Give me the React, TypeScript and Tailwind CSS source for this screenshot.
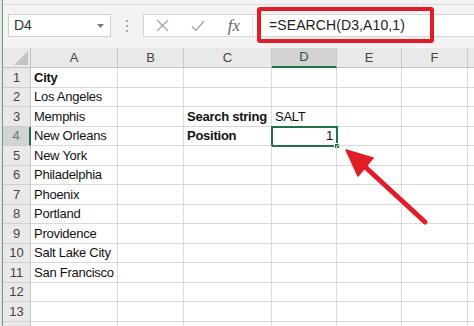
import React from 'react';

const cols = [
  { key: 'A', w: 'w-[87px]' },
  { key: 'B', w: 'w-[66px]' },
  { key: 'C', w: 'w-[88px]' },
  { key: 'D', w: 'w-[65px]' },
  { key: 'E', w: 'w-[65px]' },
  { key: 'F', w: 'w-[66px]' },
  { key: '', w: 'w-[40px]' },
];

const cities = [
  'City',
  'Los Angeles',
  'Memphis',
  'New Orleans',
  'New York',
  'Philadelphia',
  'Phoenix',
  'Portland',
  'Providence',
  'Salt Lake City',
  'San Francisco',
];

type CellData = { text: string; bold?: boolean; right?: boolean };

const getCell = (row: number, col: string): CellData | null => {
  if (col === 'A' && row <= cities.length) return { text: cities[row - 1], bold: row === 1 };
  if (row === 3 && col === 'C') return { text: 'Search string', bold: true };
  if (row === 3 && col === 'D') return { text: 'SALT' };
  if (row === 4 && col === 'C') return { text: 'Position', bold: true };
  if (row === 4 && col === 'D') return { text: '1', right: true };
  return null;
};

const Toolbar: React.FC = () => (
  <div className="h-[44px] shrink-0 bg-[#f3f3f3] border-t border-[#dcdcdc] pt-[9px] flex items-start">
    {/* name box */}
    <div className="ml-[5px] w-[103px] h-[23px] bg-white border border-[#d0d0d0] flex items-center justify-between pl-[5px] pr-[6px]">
      <span className="text-[14px] text-[#333]">D4</span>
      <svg width="7" height="4" viewBox="0 0 7 4">
        <path d="M0 0 L7 0 L3.5 4 Z" fill="#777" />
      </svg>
    </div>
    {/* dots */}
    <div className="w-[32px] h-[23px] flex flex-col items-center justify-center gap-[3px]">
      <span className="w-[2px] h-[2px] bg-[#a8a8a8]" />
      <span className="w-[2px] h-[2px] bg-[#a8a8a8]" />
      <span className="w-[2px] h-[2px] bg-[#a8a8a8]" />
    </div>
    {/* formula box */}
    <div className="flex-1 h-[23px] bg-white border border-[#d6d6d6] border-r-0 flex items-center">
      <div className="w-[36px] h-full flex items-center justify-center">
        <svg width="13" height="13" viewBox="0 0 13 13">
          <path d="M1 1 L12 12 M12 1 L1 12" stroke="#a6a6a6" strokeWidth="1.3" />
        </svg>
      </div>
      <div className="w-[36px] h-full flex items-center justify-center">
        <svg width="14" height="12" viewBox="0 0 14 12">
          <path d="M1 6.5 L5 10.5 L13 1" stroke="#a6a6a6" strokeWidth="1.4" fill="none" />
        </svg>
      </div>
      <div className="w-[36px] h-full flex items-center justify-center">
        <span className="font-['Liberation_Serif',serif] italic text-[17px] text-[#666] leading-none">fx</span>
      </div>
      <div className="w-[1px] h-full bg-[#e4e4e4]" />
      <span className="pl-[16px] text-[14px] text-[#222] tracking-[0.1px]">=SEARCH(D3,A10,1)</span>
    </div>
  </div>
);

const Grid: React.FC = () => {
  const rows = Array.from({ length: 14 }, (_, i) => i + 1);
  return (
    <div className="flex flex-col">
      {/* column headers */}
      <div className="flex h-[20px] shrink-0">
        <div className="w-[28px] shrink-0 h-full bg-[#e9e9e9] border-r border-b border-[#c4c4c4] flex items-end justify-end pr-[2px] pb-[2px]">
          <svg width="14" height="14" viewBox="0 0 14 14">
            <path d="M14 0 L14 14 L0 14 Z" fill="#c3c3c3" />
          </svg>
        </div>
        {cols.map((c) => (
          <div
            key={c.key + 'h'}
            className={`${c.w} shrink-0 h-full border-r border-[#c8c8c8] flex items-center justify-center text-[13px] ${
              c.key === 'D'
                ? 'bg-[#d3d3d3] border-b-2 border-b-[#217346] text-[#1e5c38]'
                : 'bg-[#e9e9e9] border-b border-b-[#c4c4c4] text-[#444]'
            }`}
          >
            {c.key}
          </div>
        ))}
      </div>
      {rows.map((r) => (
        <div key={r} className="flex h-[19.5px] shrink-0">
          <div
            className={`w-[28px] shrink-0 h-full border-b border-[#cfcfcf] flex items-center justify-center text-[13px] ${
              r === 4
                ? 'bg-[#d3d3d3] border-r-2 border-r-[#217346] text-[#5d7d68]'
                : 'bg-[#e9e9e9] border-r border-r-[#c4c4c4] text-[#444]'
            }`}
          >
            {r < 14 ? r : ''}
          </div>
          {cols.map((c) => {
            const cell = getCell(r, c.key);
            const selected = r === 4 && c.key === 'D';
            return (
              <div
                key={c.key + r}
                className={`${c.w} shrink-0 h-full relative border-r border-b border-[#dadada] flex items-center px-[3px] whitespace-nowrap text-[13px] tracking-[-0.25px] text-[#111] ${
                  cell?.right ? 'justify-end' : 'justify-start'
                } ${cell?.bold ? 'font-bold' : ''}`}
              >
                {cell?.text}
                {selected && (
                  <>
                    <div className="absolute left-[-1px] top-[-1px] right-[-2px] bottom-[-2px] border-2 border-[#217346]" />
                    <div className="absolute right-[-4px] bottom-[-4px] w-[6px] h-[6px] bg-[#217346] border border-white" />
                  </>
                )}
              </div>
            );
          })}
        </div>
      ))}
    </div>
  );
};

export default function App() {
  return (
    <div className="relative w-[474px] h-[326px] overflow-hidden bg-white flex font-['Liberation_Sans',Arial,sans-serif]">
      <div className="w-[2px] shrink-0 bg-[#e6e6e6]" />
      <div className="w-[1px] shrink-0 bg-[#6a9f7c]" />
      <div className="flex-1 flex flex-col min-w-0 bg-[#f3f3f3] pt-[4px]">
        <Toolbar />
        <div className="bg-white flex-1 min-h-0 overflow-hidden">
          <Grid />
        </div>
      </div>

      {/* red annotation box over formula bar */}
      <div className="absolute left-[257px] top-[7px] w-[177px] h-[36px] border-4 border-[#e21d27] rounded-[3px]" />

      {/* red annotation arrow */}
      <svg className="absolute left-0 top-0" width="474" height="326" viewBox="0 0 474 326">
        <line x1="425" y1="222" x2="362" y2="164" stroke="#e21d27" strokeWidth="5" strokeLinecap="round" />
        <path d="M346 150 L373 158 L358 176 Z" fill="#e21d27" stroke="#e21d27" strokeWidth="1.5" strokeLinejoin="round" />
      </svg>
    </div>
  );
}
